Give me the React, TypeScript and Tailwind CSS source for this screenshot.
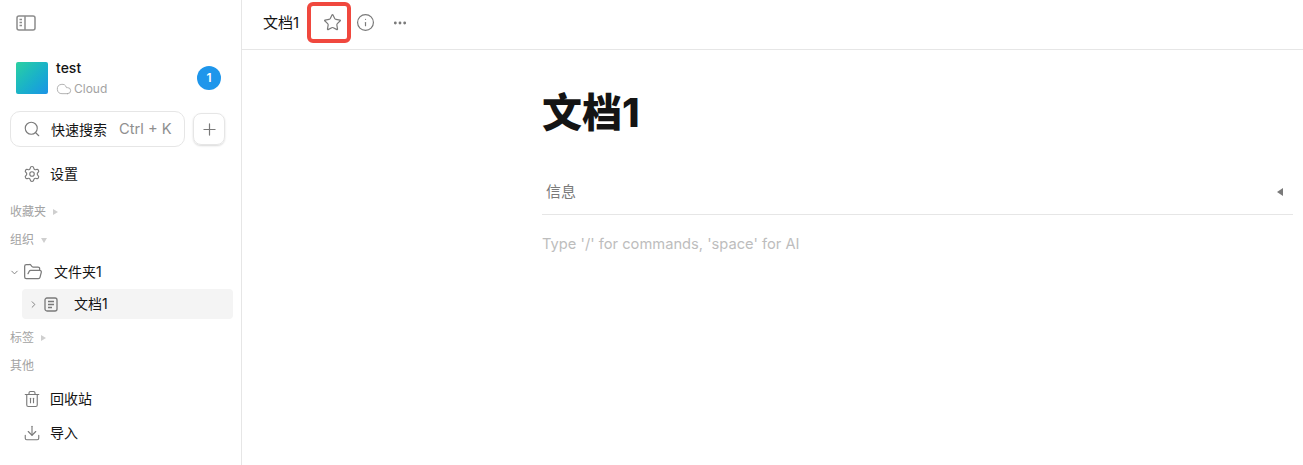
import { ChevronDown, ChevronRight, Cloud, Download, Ellipsis, FolderOpen, Info, Plus, Search, Settings, Star, Trash2 } from "lucide-react";

const font = "font-['Inter','Noto_Sans_CJK_SC',sans-serif]";

function SectionLabel({ label, arrow }: { label: string; arrow?: "right" | "down" }) {
  return (
    <div className="h-[26px] pl-[10px] pt-[2px] flex items-center gap-[7px] text-[12px] text-[#a3a3a3]">
      <span>{label}</span>
      {arrow === "right" && <span className="w-0 h-0 border-y-[3.5px] border-y-transparent border-l-[5px] border-l-[#cfcfcf]" />}
      {arrow === "down" && <span className="w-0 h-0 border-x-[3.5px] border-x-transparent border-t-[5px] border-t-[#cfcfcf]" />}
    </div>
  );
}

function NavItem({ icon, label }: { icon: React.ReactNode; label: string }) {
  return (
    <div className="h-[34px] pl-[23px] flex items-center gap-[9px] text-[14px] text-[#141414]">
      {icon}
      <span className="pb-[2px]">{label}</span>
    </div>
  );
}

function SidebarToggle() {
  return (
    <svg width="20" height="16" viewBox="0 0 20 16" fill="none" stroke="#8c8c8c" strokeWidth="1.5">
      <rect x="1" y="1" width="18" height="14" rx="2" />
      <path d="M9 1v14" />
      <path d="M3.5 4.5h2.5M3.5 7.5h2.5M3.5 10.5h2.5" />
    </svg>
  );
}

function DocIcon() {
  return (
    <svg width="14" height="15" viewBox="0 0 14 15" fill="none" stroke="#7a7a7a" strokeWidth="1.3" className="ml-[5px]">
      <rect x="1" y="1" width="12" height="13" rx="2" />
      <path d="M4 4.5h6M4 7.5h6M4 10.5h4" />
    </svg>
  );
}

export default function App() {
  return (
    <div className={`${font} w-[1303px] h-[465px] flex bg-white overflow-hidden`}>
      {/* Sidebar */}
      <aside className="w-[242px] shrink-0 border-r border-[#e6e6e6] flex flex-col">
        <div className="h-[46px] pl-[16px] flex items-center">
          <SidebarToggle />
        </div>

        <div className="mt-[13px] h-[37px] pl-[16px] pr-[20px] flex items-center">
          <div className="w-[32px] h-[32px] rounded-[2px] bg-gradient-to-br from-[#2dd0a0] to-[#1e93e6]" />
          <div className="ml-[8px] flex-1 flex flex-col">
            <span className="text-[14px] leading-[18px] font-medium text-[#141414]">test</span>
            <span className="mt-[4px] flex items-center gap-[2px] text-[12px] leading-[16px] text-[#a3a3a3]">
              <Cloud size={16} strokeWidth={1.25} />
              Cloud
            </span>
          </div>
          <div className="w-[24px] h-[24px] rounded-full bg-[#1e96eb] text-white text-[12px] font-semibold flex items-center justify-center">1</div>
        </div>

        <div className="mt-[15px] pl-[10px] pr-[16px] flex items-center gap-[8px]">
          <div className="w-[175px] h-[36px] rounded-[10px] border border-[#e6e6e6] pl-[12px] flex items-center">
            <Search size={18} strokeWidth={1.5} className="text-[#7a7a7a]" />
            <span className="ml-[10px] text-[14px] text-[#141414] whitespace-nowrap">快速搜索</span>
            <span className="ml-[12px] text-[14.7px] text-[#8f8f8f] whitespace-nowrap">Ctrl + K</span>
          </div>
          <div className="w-[32px] h-[32px] rounded-[8px] border border-[#e6e6e6] shadow-[0_1px_2px_rgba(0,0,0,0.15)] flex items-center justify-center">
            <Plus size={19} strokeWidth={1.5} className="text-[#7a7a7a]" />
          </div>
        </div>

        <div className="mt-[10px]">
          <NavItem icon={<Settings size={18} strokeWidth={1.5} className="text-[#7a7a7a]" />} label="设置" />
        </div>

        <div className="mt-[7px]">
          <SectionLabel label="收藏夹" arrow="right" />
          <div className="mt-[2px]">
            <SectionLabel label="组织" arrow="down" />
          </div>
        </div>

        <div className="mt-[4px] h-[32px] pl-[9px] flex items-center text-[14px] text-[#141414]">
          <ChevronDown size={11} strokeWidth={2} className="text-[#7a7a7a]" />
          <FolderOpen size={20} strokeWidth={1.5} className="ml-[3px] text-[#7a7a7a]" />
          <span className="ml-[11px] pb-[2px]">文件夹1</span>
        </div>

        <div className="mt-[1px] ml-[22px] mr-[8px] h-[30px] rounded-[4px] bg-[#f4f4f4] pl-[6px] flex items-center text-[14px] text-[#141414]">
          <ChevronRight size={11} strokeWidth={2} className="text-[#7a7a7a]" />
          <DocIcon />
          <span className="ml-[16px] pb-[2px]">文档1</span>
        </div>

        <div className="mt-[5px]">
          <SectionLabel label="标签" arrow="right" />
          <div className="mt-[2px]">
            <SectionLabel label="其他" />
          </div>
        </div>

        <div className="mt-[4px]">
          <NavItem icon={<Trash2 size={18} strokeWidth={1.5} className="text-[#7a7a7a]" />} label="回收站" />
          <NavItem icon={<Download size={18} strokeWidth={1.5} className="text-[#7a7a7a]" />} label="导入" />
        </div>
      </aside>

      {/* Main */}
      <main className="flex-1 min-w-0 flex flex-col">
        <header className="h-[50px] shrink-0 border-b border-[#e6e6e6] pl-[21px] pb-[4px] flex items-center">
          <span className="text-[15px] text-[#141414] pt-[2px]">文档1</span>
          <div className="ml-[8px] w-[44px] h-[41px] pl-[6px] rounded-[6px] border-[4px] border-[#f0483e] flex items-center justify-center">
            <Star size={19} strokeWidth={1.5} className="text-[#7a7a7a]" />
          </div>
          <Info size={19} strokeWidth={1.5} className="ml-[5px] text-[#7a7a7a]" />
          <Ellipsis size={16} strokeWidth={2.25} className="ml-[17px] text-[#7a7a7a]" />
        </header>

        <div className="pl-[300px] pr-[10px]">
          <h1 className="mt-[36px] text-[40px] leading-[54px] font-extrabold text-[#141414]">文档1</h1>
          <div className="mt-[24px] h-[51px] pt-[6px] border-b border-[#e6e6e6] pl-[4px] pr-[10px] flex items-center justify-between">
            <span className="text-[15px] text-[#7a7a7a]">信息</span>
            <span className="w-0 h-0 border-y-[4px] border-y-transparent border-r-[6px] border-r-[#7a7a7a]" />
          </div>
          <p className="mt-[19px] text-[14.7px] leading-[20px] text-[#bdbdbd]">Type '/' for commands, 'space' for AI</p>
        </div>
      </main>
    </div>
  );
}
